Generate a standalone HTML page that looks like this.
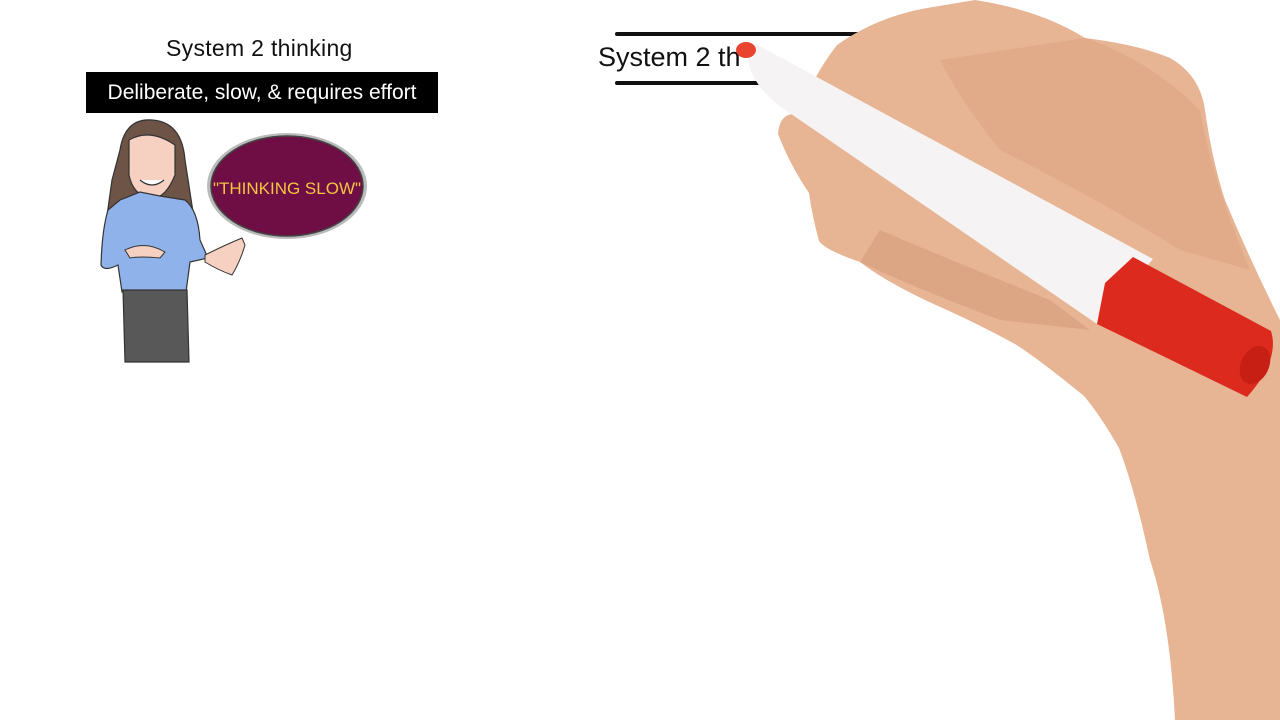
<!DOCTYPE html>
<html><head><meta charset="utf-8"><style>
html,body{margin:0;padding:0;background:#fff;width:1280px;height:720px;overflow:hidden;position:relative;font-family:"Liberation Sans",sans-serif}
.t1{position:absolute;left:166px;top:35px;font-size:23px;color:#111;letter-spacing:0.3px}
.bar{position:absolute;left:86px;top:72px;width:352px;height:41px;background:#000;color:#fff;font-size:21px;line-height:41px;text-align:center}
.t2{position:absolute;left:598px;top:42px;font-size:27px;color:#111}
.l{position:absolute;left:615px;height:4px;background:#111;width:250px;border-radius:2px}
</style></head><body>
<div class="t1">System 2 thinking</div>
<div class="bar">Deliberate, slow, &amp; requires effort</div>
<div class="l" style="top:32px"></div>
<div class="l" style="top:81px"></div>
<div class="t2">System 2 th</div>
<svg width="1280" height="720" style="position:absolute;left:0;top:0">
<!-- woman -->
<path d="M120 150 Q125 118 152 120 Q182 122 185 160 L195 225 L105 230 L112 180 Z" fill="#6e5446" stroke="#333" stroke-width="1.2"/>
<path d="M129 140 Q150 128 175 145 L175 175 Q165 200 150 198 Q133 195 129 175 Z" fill="#f6d0c0" stroke="#333" stroke-width="1.2"/>
<path d="M140 180 Q152 190 164 180" stroke="#333" fill="#fff" stroke-width="1.2"/>
<path d="M120 200 L140 192 L160 196 L185 200 Q198 210 200 240 L208 258 L190 262 L186 292 L122 292 L118 265 Q104 272 101 265 Q102 230 108 210 Z" fill="#8fb2ea" stroke="#333" stroke-width="1.2"/>
<path d="M125 250 Q145 240 165 252 L160 258 Q140 256 130 258 Z" fill="#f6d0c0" stroke="#333" stroke-width="1"/>
<path d="M205 255 Q225 245 242 238 L245 245 Q240 262 232 275 Q218 270 205 262 Z" fill="#f6d0c0" stroke="#333" stroke-width="1"/>
<path d="M123 290 L187 290 L189 362 L125 362 Z" fill="#585858" stroke="#333" stroke-width="1.2"/>
<ellipse cx="287" cy="186" rx="80" ry="53" fill="#bbb"/>
<ellipse cx="287" cy="186" rx="76" ry="50" fill="#6e0e45" stroke="#444" stroke-width="1.5"/>
<text x="287" y="194" font-size="17" fill="#f5c542" text-anchor="middle" font-family="Liberation Sans">"THINKING SLOW"</text>
<!-- hand -->
<path d="M837 45 Q880 15 933 7 L975 0 Q1040 10 1085 38 Q1140 45 1170 58 Q1200 75 1205 110 Q1212 160 1225 200 Q1250 260 1280 320 L1280 720 L1175 720 Q1170 620 1150 560 Q1135 490 1119 448 Q1100 415 1084 396 Q1040 360 1015 344 Q980 325 947 310 Q890 285 860 262 Q825 250 819 241 Q812 215 809 193 Q790 165 778 134 Q780 110 800 115 Q810 80 837 45 Z" fill="#e7b494"/>
<path d="M1085 38 Q1150 60 1200 110 Q1212 180 1250 270 L1180 250 Q1100 200 1000 150 Q960 100 940 60 Z" fill="#dea583" opacity="0.6"/>
<path d="M860 262 Q920 290 1000 320 L1090 330 L1050 300 Q950 260 880 230 Z" fill="#d69c7c" opacity="0.6"/>
<!-- marker -->
<path d="M754 43 L1153 259 L1097 324 L781 107 Q752 85 748 60 Z" fill="#f6f3f4"/>
<path d="M1133 257 L1271 331 Q1280 360 1247 397 L1097 324 L1105 283 Z" fill="#dc2b1e"/>
<ellipse cx="1255" cy="365" rx="14" ry="20" fill="#c81f14" transform="rotate(25 1255 365)"/>
<ellipse cx="746" cy="50" rx="10" ry="8" fill="#e8442f"/>
</svg>
</body></html>
